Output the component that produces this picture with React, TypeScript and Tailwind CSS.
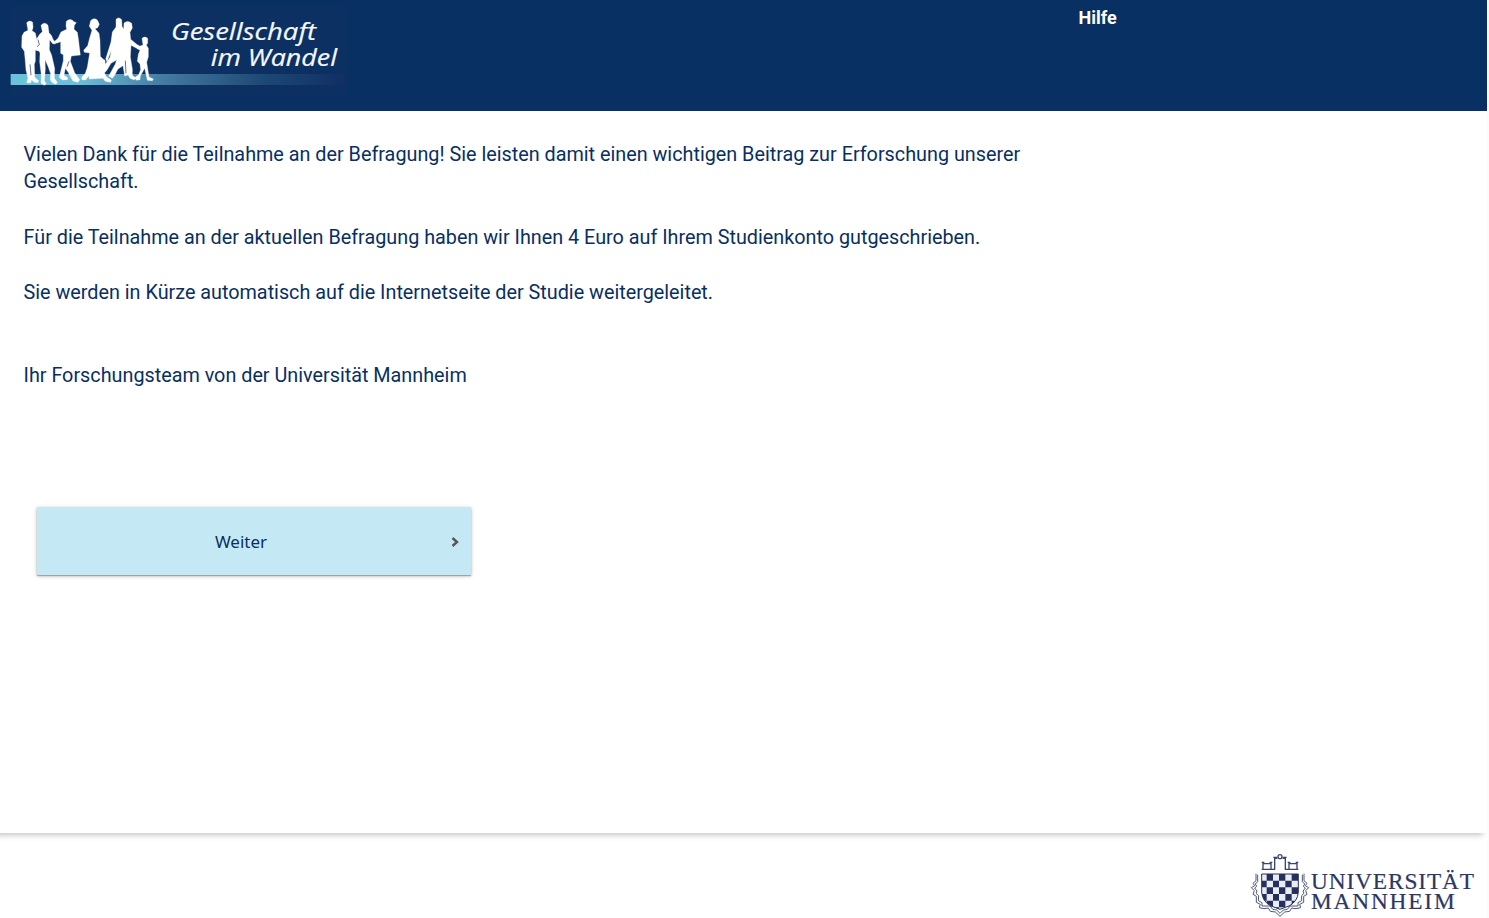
function StudyLogo() {
  return (
    <svg className="block h-[93px] w-[337px]" viewBox="30 15 1011 279" role="img" aria-label="Gesellschaft im Wandel">
      <defs>
        <linearGradient id="band" x1="0" x2="1" y1="0" y2="0">
          <stop offset="0" stopColor="#69c3da" />
          <stop offset="0.2" stopColor="#6ebfd8" />
          <stop offset="0.45" stopColor="#447ca2" />
          <stop offset="0.75" stopColor="#1d4975" />
          <stop offset="1" stopColor="#102e64" />
        </linearGradient>
      </defs>
      <rect x="30" y="15" width="1011" height="279" fill="#0d3063" />
      <rect x="32" y="222" width="1009" height="33" fill="url(#band)" />
      <g fill="#fff" stroke="#fff" strokeWidth="1">
        <path d="M80 68Q88 59 98 67L99 83L96 92L106 99L110 118L109 139L118 148L116 153L106 151L106 184L103 193L104 232L116 242L114 248L102 247L95 239L92 249L80 248L84 234L78 211L76 185L73 154L65 142L66 108L72 97L84 91Z" />
        <path d="M123 76Q134 63 144 76L147 98L154 106L160 120L168 127L166 132L158 131L149 119L148 149L155 166L164 205L163 235L172 247L168 253L157 248L151 240L152 221L144 199L135 179L136 207L133 242L139 251L133 256L123 249L124 226L119 185L120 159L114 148L105 143L101 134L108 120L119 103L127 95Z" />
        <path d="M199 64Q211 53 222 65L229 68L223 76L222 88L232 97L235 116L241 165L214 168L211 184L224 218L239 239L234 247L219 243L204 216L196 205L192 226L203 233L202 239L187 240L178 232L184 206L190 183L190 164L182 160L182 125L170 130L164 124L174 115L183 96L200 88L198 78Z" />
        <path d="M272 62Q281 51 292 60L298 73L293 83L285 86L297 100L300 122L301 169L309 177L315 181L317 205L314 220L320 231L334 240L332 247L316 244L309 235L268 237L266 228L257 240L246 239L245 232L256 220L262 202L269 159L253 157L251 151L263 137L270 110L276 91L268 79Z" />
        <path d="M348 58Q357 49 365 59L366 79L371 88L372 69Q383 59 395 70L397 84L390 97L392 118L409 132L420 139L414 147L393 136L391 171L397 207L397 226L407 234L403 240L390 235L384 225L374 228L369 197L354 207L344 226L337 235L326 229L346 192L350 180L333 190L321 210L315 217L313 197L330 172L334 151L321 185L317 177L333 126L337 96L348 81Z" />
        <path d="M426 115Q434 107 443 115L443 130L439 135L445 145L445 170L440 187L447 231L460 237L457 242L442 241L434 205L421 228L420 239L410 241L404 233L416 224L422 209L420 192L412 184L415 163L420 151L412 146L418 139L429 135Z" />
      </g>
      <path d="M90 193L93 226M207 184L201 200M114 119L118 134L111 140M376 182L378 220" fill="none" stroke="#0d3063" strokeWidth="2" />
      <g fill="#f5f8fc" stroke="#f5f8fc" strokeWidth="0.6" fontFamily="'Open Sans', 'Noto Sans', sans-serif" fontStyle="italic" fontSize="72">
        <text x="513" y="121" textLength="435" lengthAdjust="spacingAndGlyphs">Gesellschaft</text>
        <text x="632" y="197" textLength="379" lengthAdjust="spacingAndGlyphs">im Wandel</text>
      </g>
    </svg>
  );
}

function UniversityLogo() {
  return (
    <svg className="block h-[70px] w-[232px]" viewBox="0 0 696 210" role="img" aria-label="Universität Mannheim">
      <defs>
        <clipPath id="shield">
          <path d="M50 78H160V132Q158 161 132 174L105 184L78 174Q52 161 50 132Z" />
        </clipPath>
      </defs>
      <g fill="none" stroke="#3a4572" strokeWidth="4">
        <path d="M50 64H89V31H97M113 31H121V64H160M54 62V47H78V62M132 62V47H156V62M50 43H58M74 43H82M128 43H136M152 43H160M85 28H97M113 28H125" />
        <circle cx="105" cy="26" r="6" />
        <path strokeWidth="3" stroke="#4d577f" d="M33 77V98L24 106L29 113L19 119L28 128L24 139L34 145L34 163L46 169L43 179L57 182L70 180L76 190L91 192L105 205L119 192L134 190L140 180L153 182L167 179L164 169L176 163V145L186 139L182 128L191 119L181 113L186 106L177 98V77M38 80V101L31 108L35 115L29 120L36 129L33 136L41 143L40 158L51 164L51 174L75 174L83 184L95 186L105 196L115 186L127 184L135 174L159 174V164L170 158V143L177 136L174 129L181 120L175 115L179 108L172 101V80" />
      </g>
      <g clipPath="url(#shield)">
        <rect x="50" y="76" width="110" height="115" fill="#e9ecf2" />
        <path fill="#25305f" d="M65 78h19v20h-19zM102 78h19v20h-19zM140 78h20v20h-20zM50 98h15v20h-15zM84 98h18v20h-18zM121 98h19v20h-19zM65 118h19v20h-19zM102 118h19v20h-19zM140 118h20v20h-20zM50 138h15v20h-15zM84 138h18v20h-18zM121 138h19v20h-19zM65 158h19v20h-19zM102 158h19v20h-19zM140 158h20v20h-20zM84 178h18v20h-18z" />
      </g>
      <path d="M50 78H160V132Q158 161 132 174L105 184L78 174Q52 161 50 132Z" fill="none" stroke="#25305f" strokeWidth="3" />
      <g fill="#2b3765" stroke="#2b3765" strokeWidth="0.6" fontFamily="'Liberation Serif', serif" fontSize="70">
        <text x="198" y="122" textLength="489" lengthAdjust="spacing">UNIVERSITÄT</text>
        <text x="198" y="183" textLength="431" lengthAdjust="spacing">MANNHEIM</text>
      </g>
    </svg>
  );
}

export default function App() {
  return (
    <div className="flex h-[918px] flex-col overflow-hidden border-r-2 border-[#fbfbfb] bg-white font-['Roboto',sans-serif] text-[#082f63]">
      <header className="flex h-[111px] shrink-0 items-start bg-[#083063] pl-[10px]">
        <div className="w-[1068.5px] pt-[5px]">
          <StudyLogo />
        </div>
        <a href="#" className="pt-[7px] text-[18px] leading-[21px] font-bold text-white">Hilfe</a>
      </header>
      <main className="-ml-2 h-[722px] shrink-0 bg-white pt-[29.6px] pl-[31.5px] shadow-[0_6px_6px_-4px_rgba(0,0,0,0.24)]">
        <div className="w-[1020px] text-[19.79px] leading-[27.65px]">
          <p>
            Vielen Dank für die Teilnahme an der Befragung! Sie leisten damit einen wichtigen Beitrag zur Erforschung unserer
            <br />
            Gesellschaft.
          </p>
          <p className="mt-[27.9px]">Für die Teilnahme an der aktuellen Befragung haben wir Ihnen 4 Euro auf Ihrem Studienkonto gutgeschrieben.</p>
          <p className="mt-[27.65px]">Sie werden in Kürze automatisch auf die Internetseite der Studie weitergeleitet.</p>
          <p className="mt-[55.3px]">Ihr Forschungsteam von der Universität Mannheim</p>
        </div>
        <button className="mt-[117.15px] ml-[13.5px] flex h-[68px] w-[434px] items-center bg-[#c5e9f4] pt-[2px] shadow-[0_1px_4px_rgba(0,0,0,0.25),0_1px_1px_rgba(0,0,0,0.25)]">
          <span className="w-[408px] text-center font-['Noto_Sans',sans-serif] text-[17px] leading-[24px]">Weiter</span>
          <svg className="ml-[6px] h-[10px] w-[9px]" viewBox="0 0 9 10" fill="none" stroke="#555" strokeWidth="2.4">
            <path d="M1.5 1L6 5L1.5 9" />
          </svg>
        </button>
      </main>
      <footer className="flex h-[85px] shrink-0 items-start justify-end pt-[15px] pr-[10px]">
        <UniversityLogo />
      </footer>
    </div>
  );
}
